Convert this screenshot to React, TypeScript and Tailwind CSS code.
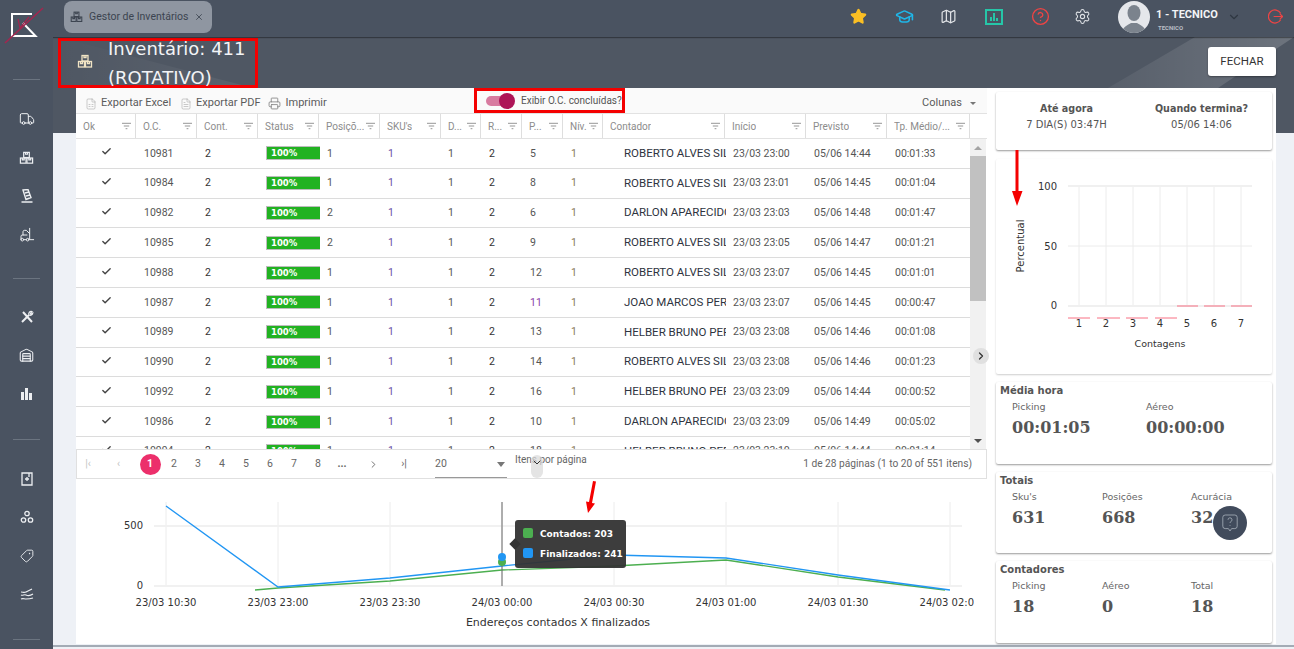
import { Star, GraduationCap, Map as MapIcon, CircleHelp, Settings, ChevronDown, ChevronRight, Check, Truck, Forklift, Warehouse, Tag, X, Printer, FileSpreadsheet, FileText } from "lucide-react";

const columns = [
  { label: "Ok", w: "w-[60px]" },
  { label: "O.C.", w: "w-[61px]" },
  { label: "Cont.", w: "w-[61px]" },
  { label: "Status", w: "w-[61px]" },
  { label: "Posiçõ...", w: "w-[61px]" },
  { label: "SKU's", w: "w-[61px]" },
  { label: "D...", w: "w-[40px]" },
  { label: "R...", w: "w-[41px]" },
  { label: "P...", w: "w-[41px]" },
  { label: "Nív.", w: "w-[40px]" },
  { label: "Contador", w: "w-[122px]" },
  { label: "Início", w: "w-[81px]" },
  { label: "Previsto", w: "w-[81px]" },
  { label: "Tp. Médio/...", w: "w-[83px]" },
];

const rows = [
  ["10981", "1", "5", "ROBERTO ALVES SILVA", "23/03 23:00", "05/06 14:44", "00:01:33"],
  ["10984", "1", "8", "ROBERTO ALVES SILVA", "23/03 23:01", "05/06 14:45", "00:01:04"],
  ["10982", "2", "6", "DARLON APARECIDO", "23/03 23:03", "05/06 14:48", "00:01:47"],
  ["10985", "2", "9", "ROBERTO ALVES SILVA", "23/03 23:05", "05/06 14:47", "00:01:21"],
  ["10988", "1", "12", "ROBERTO ALVES SILVA", "23/03 23:07", "05/06 14:45", "00:01:01"],
  ["10987", "1", "11", "JOAO MARCOS PEREIRA", "23/03 23:07", "05/06 14:45", "00:00:47"],
  ["10989", "1", "13", "HELBER BRUNO PEREIRA", "23/03 23:08", "05/06 14:46", "00:01:08"],
  ["10990", "1", "14", "ROBERTO ALVES SILVA", "23/03 23:08", "05/06 14:46", "00:01:23"],
  ["10992", "1", "16", "HELBER BRUNO PEREIRA", "23/03 23:09", "05/06 14:44", "00:00:52"],
  ["10986", "1", "10", "DARLON APARECIDO", "23/03 23:09", "05/06 14:49", "00:05:02"],
  ["10994", "1", "18", "HELBER BRUNO PEREIRA", "23/03 23:10", "05/06 14:44", "00:01:14"],
];

function BoxesIcon({ className }: { className?: string }) {
  return (
    <svg viewBox="0 0 16 14" className={`shrink-0 ${className}`} fill="none" stroke="currentColor" strokeWidth="1.3">
      <rect x="5" y="1" width="6" height="5.5" />
      <rect x="1.5" y="7" width="6" height="5.5" />
      <rect x="8.5" y="7" width="6" height="5.5" />
      <path d="M7 1v2h2V1M3.5 7v2h2V7M10.5 7v2h2V7" />
    </svg>
  );
}

function FilterIcon() {
  return (
    <svg viewBox="0 0 10 8" className="w-[9px] h-[8px] shrink-0 text-[#8a8a8a]" stroke="currentColor" strokeWidth="1">
      <path d="M0 1h10M2 4h6M4 7h2" />
    </svg>
  );
}

function SideIcon({ children }: { children: React.ReactNode }) {
  return <div className="h-[38.5px] flex items-center justify-center text-[#eceef1]">{children}</div>;
}

function SideSep() {
  return <div className="mx-[13px] h-px bg-[#6b7480]" />;
}

function Sidebar() {
  return (
    <aside className="w-[53px] shrink-0 bg-[#4a5361] flex flex-col relative z-20">
      <div className="h-[79px]">
        <svg viewBox="0 0 53 79" className="w-[53px] h-[79px]" fill="none">
          <path d="M32 14H12v22h23.5L23 23" stroke="#fff" strokeWidth="2" />
          <path d="M43 8 5 43" stroke="#a3264f" strokeWidth="1.6" />
          <path d="M18 19l2 9 9-11" stroke="#a3264f" strokeWidth="1.2" />
        </svg>
      </div>
      <SideSep />
      <div className="pt-5 pb-6">
        <SideIcon><Truck size={16} strokeWidth={1.5} /></SideIcon>
        <SideIcon><BoxesIcon className="w-[15px] h-[14px]" /></SideIcon>
        <SideIcon>
          <svg viewBox="0 0 14 14" className="w-[14px] h-[14px]" fill="none" stroke="currentColor" strokeWidth="1.4">
            <path d="M3 1l5-.5 3 8-5 2zM5 4l4-1M6 7l4-1M1.5 13h11" />
          </svg>
        </SideIcon>
        <SideIcon><Forklift size={16} strokeWidth={1.5} /></SideIcon>
      </div>
      <SideSep />
      <div className="pt-[19px] pb-[25px]">
        <SideIcon>
          <svg viewBox="0 0 14 14" className="w-[14px] h-[14px]" fill="none" stroke="currentColor" strokeWidth="2">
            <path d="M2 12 9 5M3 2l9 10" />
            <path d="M9 5a2.5 2.5 0 0 1 3-3.5L10.5 3.5 11 4.5 12.8 3A2.5 2.5 0 0 1 9 5z" strokeWidth="1.2" />
          </svg>
        </SideIcon>
        <SideIcon><Warehouse size={15} strokeWidth={1.7} /></SideIcon>
        <SideIcon>
          <svg viewBox="0 0 14 14" className="w-[14px] h-[14px]" fill="currentColor">
            <path d="M1 5h3v8H1zM5 1h3v12H5zM9 6h3v7H9z" />
          </svg>
        </SideIcon>
      </div>
      <SideSep />
      <div className="pt-5 pb-[25px]">
        <SideIcon>
          <svg viewBox="0 0 14 14" className="w-[14px] h-[14px]" fill="none" stroke="currentColor" strokeWidth="1.3">
            <path d="M2 1h10v12H2zM5 7h4M7 5v4M9 1v4" />
          </svg>
        </SideIcon>
        <SideIcon>
          <svg viewBox="0 0 14 14" className="w-[14px] h-[14px]" fill="none" stroke="currentColor" strokeWidth="1.3">
            <circle cx="7" cy="3.5" r="2.2" />
            <circle cx="3.5" cy="10" r="2.2" />
            <circle cx="10.5" cy="10" r="2.2" />
          </svg>
        </SideIcon>
        <SideIcon><Tag size={14} strokeWidth={1.6} className="rotate-90" /></SideIcon>
        <SideIcon>
          <svg viewBox="0 0 14 12" className="w-[14px] h-[12px]" fill="none" stroke="currentColor" strokeWidth="1.2">
            <path d="M1 4c2 0 3 1 5 0l6-3M1 7c2 1 3-1 5 0s4 1 7-1M1 11c2-1 3 0 5 0s4 0 7-1" />
          </svg>
        </SideIcon>
      </div>
      <SideSep />
    </aside>
  );
}

function TopBar() {
  return (
    <header className="h-[37px] shrink-0 bg-[#4a5361] flex items-start shadow-[0_1px_1px_rgba(0,0,0,.35)] relative z-10">
      <div className="ml-[11px] mt-px w-[148px] h-[32px] rounded-lg bg-[#8f96a1] flex items-center text-[#3c4450]">
        <BoxesIcon className="w-[13px] h-[12px] ml-[6px]" />
        <span className="ml-[6px] text-[10.5px] whitespace-nowrap">Gestor de Inventários</span>
        <X size={10} className="ml-auto mr-2" />
      </div>
      <div className="ml-auto flex items-center h-[33px]">
        <div className="w-[46px] flex justify-center"><Star size={17} fill="#fbbf24" stroke="#fbbf24" /></div>
        <div className="w-[47px] flex justify-center"><GraduationCap size={19} stroke="#1fb6e8" strokeWidth={2} /></div>
        <div className="w-[41px] flex justify-center"><MapIcon size={17} stroke="#e3e5e8" strokeWidth={1.7} /></div>
        <div className="w-[50px] flex justify-center">
          <div className="w-[18px] h-[16px] border-2 border-[#26c6a8] flex items-end justify-center gap-px pb-[2px]">
            <span className="w-[2px] h-[4px] bg-[#26c6a8]" />
            <span className="w-[2px] h-[8px] bg-[#26c6a8]" />
            <span className="w-[2px] h-[3px] bg-[#26c6a8]" />
          </div>
        </div>
        <div className="w-[42px] flex justify-center"><CircleHelp size={19} stroke="#ef4444" strokeWidth={1.7} /></div>
        <div className="w-[42px] flex justify-center"><Settings size={17} stroke="#dfe2e6" strokeWidth={1.5} /></div>
        <div className="ml-[15px] w-[32px] h-[32px] rounded-full bg-[#e5e7eb] overflow-hidden flex justify-center">
          <svg viewBox="0 0 32 32" className="w-[32px] h-[32px]" fill="#7b838d">
            <ellipse cx="16" cy="12" rx="6.5" ry="8" />
            <path d="M4 32c0-6 6-8 9-10h6c3 2 9 4 9 10z" />
          </svg>
        </div>
        <div className="ml-[6px] w-[68px] text-[#f3f4f6] leading-none">
          <div className="text-[11px] font-bold whitespace-nowrap mt-[6px]">1 - TECNICO</div>
          <div className="text-[6px] font-bold text-[#b9bec5] mt-[5px] ml-[2px]">TECNICO</div>
        </div>
        <div className="w-[20px] flex justify-center"><ChevronDown size={14} stroke="#2f3742" /></div>
        <div className="ml-[21px] mr-[9px] w-[20px] flex justify-center">
          <svg viewBox="0 0 16 16" className="w-[15px] h-[15px]" fill="none" stroke="#ef4444" strokeWidth="1.3">
            <path d="M13.5 4.5A7 7 0 1 0 13.5 11.5M6 8h9.5M12.5 5l3 3-3 3" />
          </svg>
        </div>
      </div>
    </header>
  );
}

function Toolbar() {
  return (
    <div className="h-[25px] shrink-0 bg-[#fafafa] flex items-stretch text-[11px] text-[#5a5a5a]">
      <div className="w-[398px] flex items-center pt-[6px]">
        <FileSpreadsheet size={12} strokeWidth={1} className="ml-[9px] text-[#999]" />
        <span className="ml-[4px]">Exportar Excel</span>
        <FileText size={12} strokeWidth={1} className="ml-[9px] text-[#999]" />
        <span className="ml-[4px]">Exportar PDF</span>
        <Printer size={13} strokeWidth={1.4} className="ml-[7px] text-[#777]" />
        <span className="ml-[5px]">Imprimir</span>
      </div>
      <div className="w-[151px] border-[3px] border-[#f40000] flex items-center text-[10px] text-[#555]">
        <div className="relative ml-[9px] w-[26px] h-[10px] rounded-full bg-[#d87ba0]">
          <div className="absolute right-[-3px] top-[-3px] w-[16px] h-[16px] rounded-full bg-[#ad1457]" />
        </div>
        <span className="ml-[9px] whitespace-nowrap">Exibir O.C. concluídas?</span>
      </div>
      <div className="ml-auto flex items-center pt-[6px] pr-[11px]">
        <span>Colunas</span>
        <span className="ml-[8px] w-0 h-0 border-x-[3px] border-x-transparent border-t-[3px] border-t-[#777]" />
      </div>
    </div>
  );
}

function DataTable() {
  return (
    <div className="flex flex-col">
      <div className="h-[26px] flex border-y border-[#e2e2e2] bg-white text-[10px] text-[#8c8c8c]">
        {columns.map((c) => (
          <div key={c.label} className={`${c.w} shrink-0 flex items-center justify-between pl-[7px] pr-[4px] border-r border-[#dedede]`}>
            <span className="whitespace-nowrap overflow-hidden">{c.label}</span>
            <FilterIcon />
          </div>
        ))}
      </div>
      <div className="h-[310px] flex overflow-hidden">
        <div className="w-[894px]">
          {rows.map((r) => (
            <div key={r[0]} className="h-[29.8px] flex items-center border-b border-[#dcdcdc] text-[10.5px] text-[#555]">
              <div className="w-[60px] flex justify-center -mt-[3px] pl-px"><Check size={11} strokeWidth={3} className="text-[#444]" /></div>
              <div className="w-[61px] pl-2">{r[0]}</div>
              <div className="w-[61px] pl-2 text-[#333]">2</div>
              <div className="w-[61px] pl-2">
                <div className="w-[54px] h-[14px] bg-[#22b222] border border-[#bdbdbd] border-r-0 pl-[4px] text-white [font-family:DejaVu_Sans,sans-serif] font-bold text-[8.5px] leading-[12px]">100%</div>
              </div>
              <div className="w-[61px] pl-2">{r[1]}</div>
              <div className="w-[61px] pl-2 text-[#6a4fa3]">1</div>
              <div className="w-[40px] pl-[7px]">1</div>
              <div className="w-[41px] pl-2 text-[#333]">2</div>
              <div className={`w-[41px] pl-2 ${r[2] === "11" ? "text-[#8b3fa8]" : ""}`}>{r[2]}</div>
              <div className="w-[40px] pl-2 text-[#8a7a5a]">1</div>
              <div className="w-[123px] pl-[21px] whitespace-nowrap overflow-hidden text-[#2e3440] text-[11.5px]">{r[3]}</div>
              <div className="w-[80px] pl-[7px]">{r[4]}</div>
              <div className="w-[81px] pl-2">{r[5]}</div>
              <div className="w-[83px] pl-2">{r[6]}</div>
            </div>
          ))}
        </div>
        <div className="w-[16px] bg-[#f1f1f1] flex flex-col items-center">
          <div className="h-[17px] flex items-center justify-center">
            <span className="w-0 h-0 border-x-[4px] border-x-transparent border-b-[4px] border-b-[#a3a3a3]" />
          </div>
          <div className="w-full h-[145px] bg-[#c1c1c1]" />
          <div className="mt-auto h-[17px] flex items-center justify-center">
            <span className="w-0 h-0 border-x-[4px] border-x-transparent border-t-[4px] border-t-[#505050]" />
          </div>
        </div>
      </div>
    </div>
  );
}

function Pagination() {
  return (
    <div className="relative h-[30px] shrink-0 flex items-center border border-[#e0e0e0] bg-white text-[10.5px] text-[#666]">
      <div className="w-[22px] text-center text-[#c4c4c4]">|‹</div>
      <div className="w-[39px] text-center text-[#c4c4c4]">‹</div>
      <div className="w-[24px] flex justify-center">
        <span className="w-[21px] h-[21px] rounded-full bg-[#ec2f6b] text-white font-bold flex items-center justify-center">1</span>
      </div>
      {["2", "3", "4", "5", "6", "7", "8", "..."].map((p) => (
        <div key={p} className={`w-[24px] text-center ${p === "..." ? "font-bold" : ""}`}>{p}</div>
      ))}
      <div className="w-[38px] flex justify-center"><ChevronRight size={11} /></div>
      <div className="w-[24px] text-center">›|</div>
      <div className="ml-[19px] w-[72px] h-[26px] mt-px border-b border-[#999] flex items-center justify-between pr-[2px]">
        <span>20</span>
        <span className="w-0 h-0 border-x-[4.5px] border-x-transparent border-t-[5px] border-t-[#777]" />
      </div>
      <span className="ml-[8px] -mt-[10px] text-[10px] whitespace-nowrap">Itens por página</span>
      <span className="ml-auto pr-[14px] text-[10.2px] text-[#666]">1 de 28 páginas (1 to 20 of 551 itens)</span>
      <div className="absolute left-[454px] top-[5px] w-[12px] h-[23px] rounded-full bg-[#d9d9d9]/70 flex justify-center">
        <ChevronDown size={13} strokeWidth={2} className="text-[#333] mt-[1px]" />
      </div>
    </div>
  );
}

const blue = "166,505 278,586 390,577 502,565 614,554 726,557 838,574 950,589";
const green = "255,589 278,587 390,580 502,569 614,565 726,559 838,576 945,589";
const gridX = [166, 278, 390, 502, 614, 726, 838, 950];
const labelX = ["23/03 10:30", "23/03 23:00", "23/03 23:30", "24/03 00:00", "24/03 00:30", "24/03 01:00", "24/03 01:30", "24/03 02:00"];

function LineChart() {
  return (
    <div className="relative flex-1 min-h-0">
      <svg viewBox="76 478 898 167" className="w-[898px] h-[167px] [font-family:DejaVu_Sans,sans-serif]">
        {gridX.map((x) => (
          <line key={x} x1={x} x2={x} y1={501} y2={585} stroke="#ececec" />
        ))}
        <line x1="154" x2="962" y1="525" y2="525" stroke="#f1f1f1" strokeWidth="2" />
        <line x1="154" x2="962" y1="585" y2="585" stroke="#f1f1f1" strokeWidth="2" />
        <text x="143" y="528" textAnchor="end" fontSize="10" fill="#333">500</text>
        <text x="143" y="588" textAnchor="end" fontSize="10" fill="#333">0</text>
        <polyline points={green} fill="none" stroke="#4caf50" strokeWidth="1.3" />
        <polyline points={blue} fill="none" stroke="#2196f3" strokeWidth="1.3" />
        <line x1="502" x2="502" y1="501" y2="585" stroke="#666" />
        <circle cx="502" cy="561" r="4" fill="#4caf50" />
        <circle cx="502" cy="556" r="4" fill="#2196f3" />
        {labelX.map((l, i) => (
          <text key={l} x={gridX[i]} y="605" textAnchor="middle" fontSize="10" fill="#333">{l}</text>
        ))}
        <text x="558" y="625" textAnchor="middle" fontSize="11" fill="#333">Endereços contados X finalizados</text>
      </svg>
      <div className="absolute left-[439px] top-[41px] w-[111px] h-[48px] rounded-[3px] bg-[#333]/95 text-white [font-family:DejaVu_Sans,sans-serif] font-bold text-[9px]">
        <span className="absolute left-[-4px] top-[20px] w-[8px] h-[8px] rotate-45 bg-[#333]" />
        <div className="absolute left-[8px] top-[8px] w-[10px] h-[10px] rounded-[2px] bg-[#4caf50]" />
        <div className="absolute left-[25px] top-[8px] whitespace-nowrap">Contados: 203</div>
        <div className="absolute left-[8px] top-[28px] w-[10px] h-[10px] rounded-[2px] bg-[#2196f3]" />
        <div className="absolute left-[25px] top-[28px] whitespace-nowrap">Finalizados: 241</div>
      </div>
    </div>
  );
}

function MiniChart() {
  const xs = [1079, 1106, 1133, 1160, 1187, 1214, 1241];
  const low = [[1068, 1090], [1097, 1120], [1126, 1148], [1155, 1177]];
  const zero = [[1177, 1198], [1204, 1225], [1231, 1252]];
  return (
    <svg viewBox="996 159 277 215" className="w-[277px] h-[215px] [font-family:DejaVu_Sans,sans-serif]">
      {xs.map((x) => (
        <line key={x} x1={x} x2={x} y1={186} y2={306} stroke="#ececec" />
      ))}
      <line x1="1068" x2="1252" y1="186" y2="186" stroke="#f0f0f0" strokeWidth="2" />
      <line x1="1068" x2="1252" y1="246" y2="246" stroke="#ececec" />
      <line x1="1068" x2="1252" y1="306" y2="306" stroke="#f0f0f0" strokeWidth="2" />
      <text x="1057" y="190" textAnchor="end" fontSize="10" fill="#333">100</text>
      <text x="1057" y="250" textAnchor="end" fontSize="10" fill="#333">50</text>
      <text x="1057" y="309" textAnchor="end" fontSize="10" fill="#333">0</text>
      {low.map(([a, b]) => (
        <line key={a} x1={a} x2={b} y1="318" y2="318" stroke="#f87184" />
      ))}
      {zero.map(([a, b]) => (
        <line key={a} x1={a} x2={b} y1="306" y2="306" stroke="#f87184" />
      ))}
      {xs.map((x, i) => (
        <text key={x} x={x} y="327" textAnchor="middle" fontSize="10" fill="#333">{i + 1}</text>
      ))}
      <text x="1160" y="347" textAnchor="middle" fontSize="9.5" fill="#333">Contagens</text>
      <text transform="translate(1024 246) rotate(-90)" textAnchor="middle" fontSize="10" fill="#333">Percentual</text>
    </svg>
  );
}

function StatCard({ title, items, cols, className }: { title: string; items: [string, string][]; cols: string; className: string }) {
  return (
    <div className={`bg-white rounded-[2px] shadow-[0_1px_2px_rgba(0,0,0,.4)] pl-[4px] pt-[2px] ${className}`}>
      <div className="text-[10px] font-bold text-[#555] leading-[13px]">{title}</div>
      <div className={`grid ${cols} pl-[12px] mt-[4px]`}>
        {items.map(([label, value]) => (
          <div key={label}>
            <div className="text-[9.5px] leading-[12px] text-[#666]">{label}</div>
            <div className="[font-family:DejaVu_Serif,serif] font-bold text-[16px] leading-[20px] mt-[5px] text-[#555]">{value}</div>
          </div>
        ))}
      </div>
    </div>
  );
}

function RightColumn() {
  return (
    <div className="w-[289px] pl-[9px] pr-[4px] pt-[4px] flex flex-col [font-family:DejaVu_Sans,sans-serif] relative">
      <div className="h-[58px] bg-white rounded-[2px] shadow-[0_1px_2px_rgba(0,0,0,.4)] grid grid-cols-2 pt-[9px] text-center text-[#555] text-[10px] leading-[16px]">
        <div className="pl-[3px]">
          <div className="font-bold text-[9.6px]">Até agora</div>
          <div>7 DIA(S) 03:47H</div>
        </div>
        <div className="pr-[3px]">
          <div className="font-bold text-[9.6px]">Quando termina?</div>
          <div>05/06 14:06</div>
        </div>
      </div>
      <div className="mt-[9px] h-[215px] bg-white rounded-[2px] shadow-[0_1px_2px_rgba(0,0,0,.2)]">
        <MiniChart />
      </div>
      <StatCard title="Média hora" cols="grid-cols-[134px_1fr]" className="mt-[8px] h-[82px]" items={[["Picking", "00:01:05"], ["Aéreo", "00:00:00"]]} />
      <StatCard title="Totais" cols="grid-cols-[90px_89px_1fr]" className="mt-[8px] h-[81px]" items={[["Sku's", "631"], ["Posições", "668"], ["Acurácia", "32"]]} />
      <StatCard title="Contadores" cols="grid-cols-[90px_89px_1fr]" className="mt-[8px] h-[82px]" items={[["Picking", "18"], ["Aéreo", "0"], ["Total", "18"]]} />
      <div className="absolute left-[226px] top-[418px] w-[34px] h-[34px] rounded-full bg-[#414b5c] flex items-center justify-center">
        <svg viewBox="0 0 20 22" className="w-[16px] h-[18px]" fill="none" stroke="#aab2bd" strokeWidth="1">
          <path d="M4 1h12a3 3 0 0 1 3 3v11a3 3 0 0 1-3 3h-4l-2 3-2-3H4a3 3 0 0 1-3-3V4a3 3 0 0 1 3-3z" />
          <path d="M7.5 7a2.5 2.5 0 1 1 3.5 2.3c-.7.4-1 .9-1 1.7M10 13.5v1" />
        </svg>
      </div>
    </div>
  );
}

export default function App() {
  return (
    <div className="flex h-screen w-screen overflow-hidden bg-[#eef1f6] [font-family:Roboto,sans-serif]">
      <Sidebar />
      <div className="flex-1 min-w-0 flex flex-col">
        <TopBar />
        <div className="relative h-[96px] shrink-0 bg-[#4f5763] flex items-start justify-between pr-[18px]">
          <svg viewBox="0 0 1241 96" className="absolute inset-0 w-full h-full" aria-hidden="true">
            <defs>
              <linearGradient id="stripe" x1="0" y1="0" x2="1" y2="0">
                <stop offset="0" stopColor="#fff" stopOpacity="0.05" />
                <stop offset="1" stopColor="#fff" stopOpacity="0.17" />
              </linearGradient>
              <linearGradient id="wedge" x1="0" y1="0" x2="1" y2="0">
                <stop offset="0" stopColor="#fff" stopOpacity="0" />
                <stop offset="1" stopColor="#fff" stopOpacity="0.07" />
              </linearGradient>
            </defs>
            <polygon points="5,0 200,51 5,51" fill="url(#wedge)" />
            <polygon points="1055,51 1142,0 1241,0 1165,51" fill="url(#stripe)" />
          </svg>
          <div className="relative ml-[5px] mt-px w-[200px] h-[50px] border-[3px] border-[#f40000] flex">
            <BoxesIcon className="w-[16px] h-[15px] ml-[16px] mt-[13px] text-[#f1e4c4]" />
            <div className="ml-[15px] -mt-[7px] w-[160px] shrink-0 [font-family:DejaVu_Sans,sans-serif] text-[18px] leading-[29px] text-[#f3f4f6]">
              Inventário: 411 (ROTATIVO)
            </div>
          </div>
          <button className="relative mt-[10px] w-[68px] h-[29px] rounded-[3px] bg-white text-[11.5px] text-[#333] shadow-[0_1px_2px_rgba(0,0,0,.35)]">
            FECHAR
          </button>
        </div>
        <div className="relative ml-[23px] w-[1200px] h-[556px] -mt-[45px] bg-white flex">
          <div className="w-[911px] flex flex-col relative">
            <Toolbar />
            <DataTable />
            <Pagination />
            <LineChart />
            <div className="absolute left-[897px] top-[260px] w-[16px] h-[16px] rounded-full bg-[#e0e0e0] flex items-center justify-center">
              <ChevronRight size={12} strokeWidth={2.5} className="text-[#333]" />
            </div>
          </div>
          <RightColumn />
          <svg viewBox="0 0 20 34" className="absolute left-[505px] top-[392px] w-[20px] h-[34px]" fill="#f40000" aria-hidden="true">
            <path d="M12 1 15 1.5 11 23l3 .5-7 9.5-2-11.5 3 .5z" />
          </svg>
          <svg viewBox="0 0 12 58" className="absolute left-[935px] top-[62px] w-[12px] h-[58px]" fill="#f40000" aria-hidden="true">
            <path d="M4.5 0h3v41h4L6 56 1 41h3.5z" />
          </svg>
        </div>
        <div className="mt-px border-t-2 border-[#a3abb5] flex-1 bg-[#eef1f6]" />
      </div>
    </div>
  );
}
